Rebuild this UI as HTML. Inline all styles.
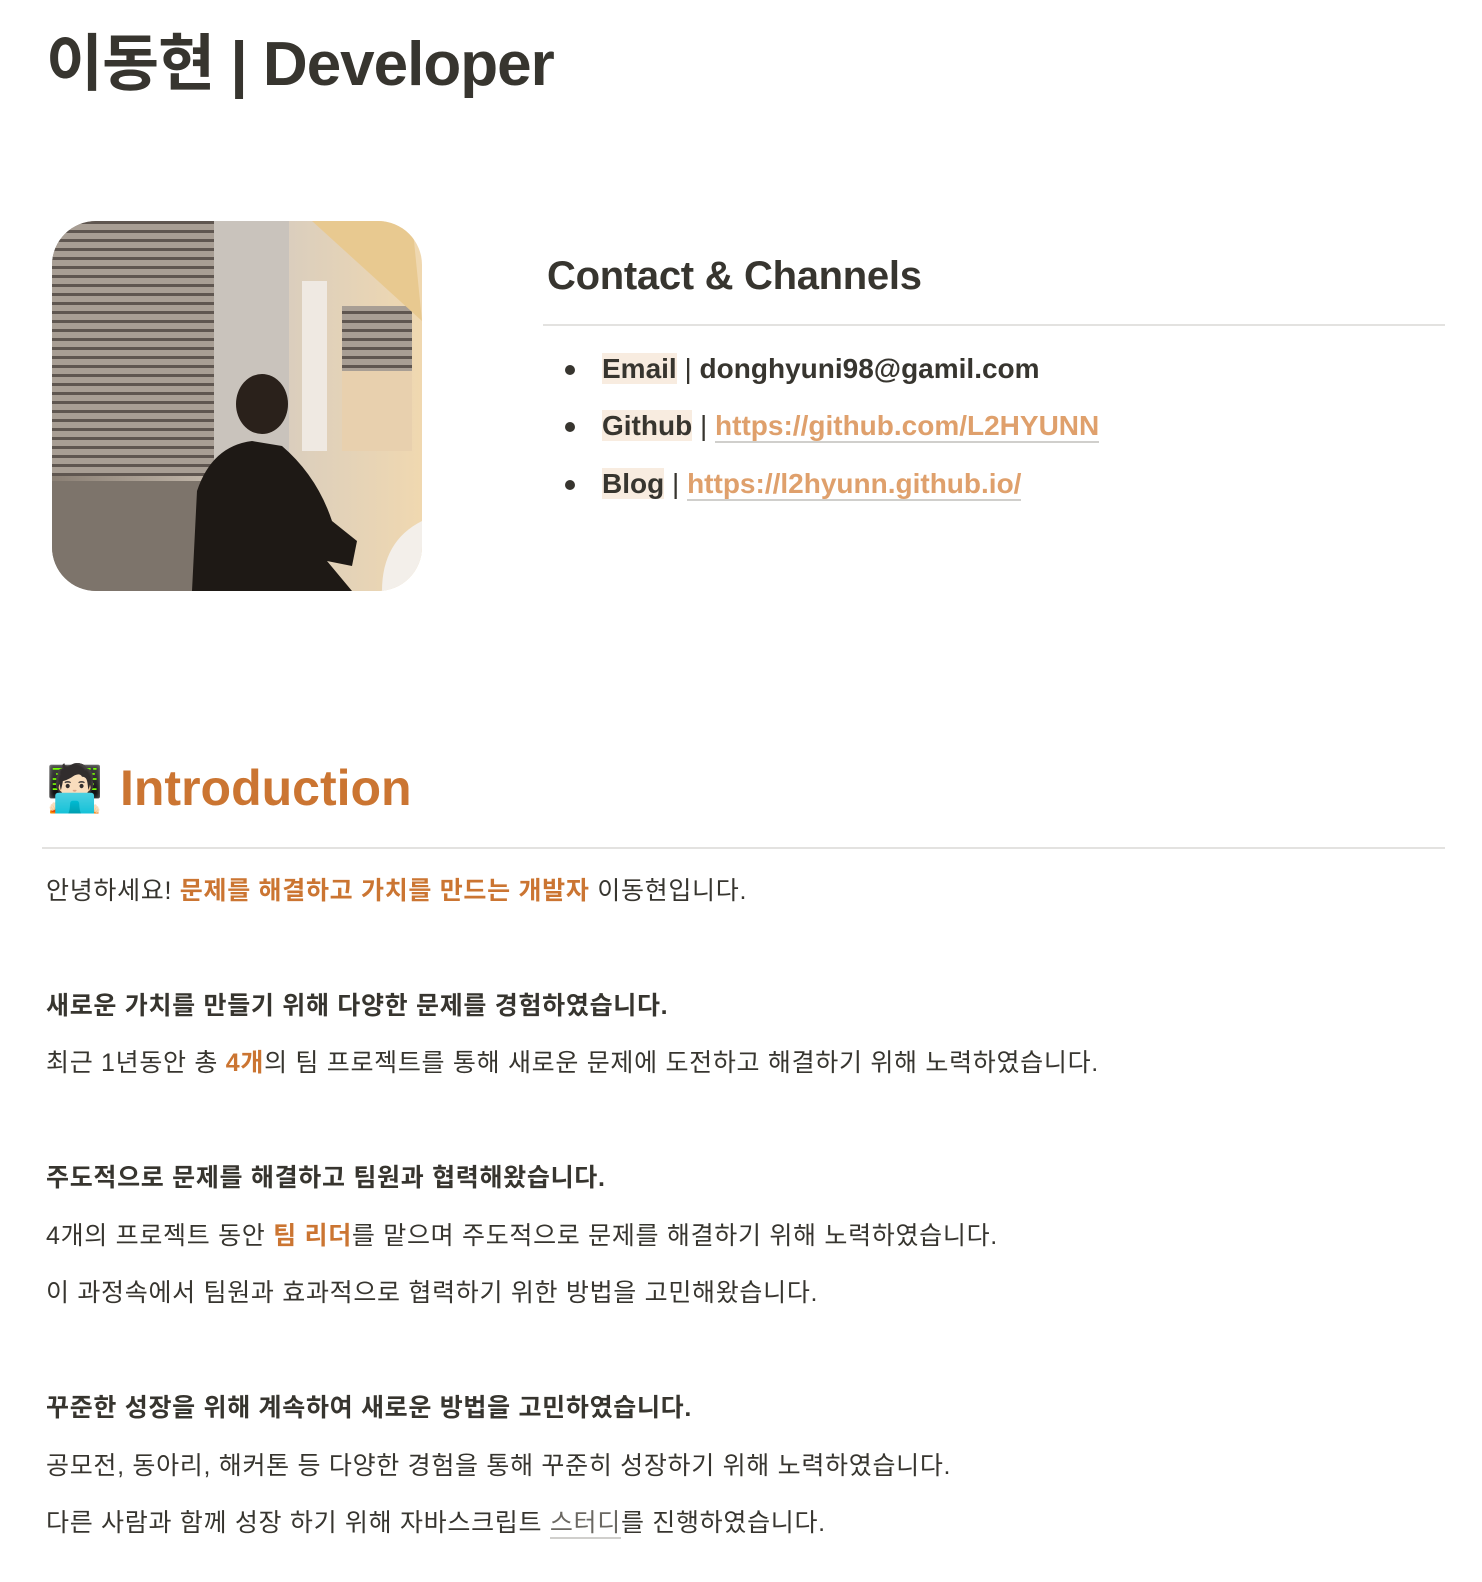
<!DOCTYPE html>
<html><head><meta charset="utf-8"><style>
*{margin:0;padding:0;box-sizing:border-box}
body{width:1482px;height:1582px;background:#fff;color:#37352f;font-family:"Liberation Sans","Noto Sans CJK KR",sans-serif;position:relative;overflow:hidden}
.a{position:absolute;white-space:nowrap}
h1{position:absolute;left:46px;top:26px;font-size:62px;font-weight:700;letter-spacing:-1px;line-height:78px}
.hr{position:absolute;height:2px;background:#e3e2e0}
.li{position:absolute;left:565px;font-size:28px;line-height:36px}
.li .b{position:absolute;left:0;top:14px;width:10px;height:10px;border-radius:50%;background:#37352f}
.li .t{position:absolute;left:37px;top:0;white-space:nowrap}
.hl{background:#f8ece0;font-weight:700}
.lk{color:#dfa06c;font-weight:700;border-bottom:2px solid #d0cfcc}
.p{position:absolute;left:46px;font-size:25px;letter-spacing:0.7px;line-height:32px;white-space:nowrap}
.o{color:#cb7532;font-weight:700}
.bd{font-weight:700}
</style></head><body>
<h1>이동현 | Developer</h1>
<div class="a" style="left:52px;top:221px;width:370px;height:370px;border-radius:44px;overflow:hidden">
<svg width="370" height="370" viewBox="0 0 370 370">
<defs><linearGradient id="g" x1="0" x2="1" y1="0" y2="0"><stop offset="0" stop-color="#8a7f74"/><stop offset="0.6" stop-color="#d8cdbf"/><stop offset="1" stop-color="#f0d8b0"/></linearGradient>
<pattern id="bl" width="10" height="9" patternUnits="userSpaceOnUse"><rect width="10" height="9" fill="#a89e94"/><rect width="10" height="3" fill="#5f5650"/></pattern></defs>
<rect width="370" height="370" fill="url(#g)"/>
<rect x="0" y="0" width="162" height="255" fill="url(#bl)"/>
<rect x="162" y="0" width="75" height="370" fill="#c9c3bc"/>
<rect x="250" y="60" width="25" height="170" fill="#efe9e2"/>
<rect x="290" y="85" width="70" height="65" fill="url(#bl)"/>
<rect x="290" y="150" width="70" height="80" fill="#e8d0ae"/>
<polygon points="260,0 360,0 370,100" fill="#e8c990"/>
<rect x="0" y="260" width="170" height="110" fill="#7d746b"/>
<path d="M140 370 L145 270 Q160 225 200 220 L230 225 Q265 255 280 300 L305 320 L300 345 L275 340 L300 370 Z" fill="#1e1915"/>
<ellipse cx="210" cy="183" rx="26" ry="30" fill="#2a211b"/>
<path d="M330 370 Q330 320 370 300 L370 370 Z" fill="#f3efea"/>
</svg></div>
<div class="a" style="left:547px;top:250px;font-size:40px;font-weight:700;line-height:52px;letter-spacing:-0.3px">Contact &amp; Channels</div>
<div class="hr" style="left:543px;top:324px;width:902px"></div>
<div class="li" style="top:351px"><span class="b"></span><span class="t"><span class="hl">Email</span> | <b>donghyuni98@gamil.com</b></span></div>
<div class="li" style="top:408px"><span class="b"></span><span class="t"><span class="hl">Github</span> | <span class="lk">https://github.com/L2HYUNN</span></span></div>
<div class="li" style="top:466px"><span class="b"></span><span class="t"><span class="hl">Blog</span> | <span class="lk">https://l2hyunn.github.io/</span></span></div>
<div class="a" style="left:46px;top:760px;font-size:46px;line-height:56px">🧑🏻‍💻</div>
<div class="a" style="left:120px;top:756px;font-size:50px;font-weight:700;color:#cb7532;line-height:64px">Introduction</div>
<div class="hr" style="left:42px;top:847px;width:1403px"></div>
<div class="p" style="top:875px">안녕하세요! <span class="o">문제를 해결하고 가치를 만드는 개발자</span> 이동현입니다.</div>
<div class="p bd" style="top:990px">새로운 가치를 만들기 위해 다양한 문제를 경험하였습니다.</div>
<div class="p" style="top:1047px">최근 1년동안 총 <span class="o">4개</span>의 팀 프로젝트를 통해 새로운 문제에 도전하고 해결하기 위해 노력하였습니다.</div>
<div class="p bd" style="top:1162px">주도적으로 문제를 해결하고 팀원과 협력해왔습니다.</div>
<div class="p" style="top:1220px">4개의 프로젝트 동안 <span class="o">팀 리더</span>를 맡으며 주도적으로 문제를 해결하기 위해 노력하였습니다.</div>
<div class="p" style="top:1277px">이 과정속에서 팀원과 효과적으로 협력하기 위한 방법을 고민해왔습니다.</div>
<div class="p bd" style="top:1392px">꾸준한 성장을 위해 계속하여 새로운 방법을 고민하였습니다.</div>
<div class="p" style="top:1450px">공모전, 동아리, 해커톤 등 다양한 경험을 통해 꾸준히 성장하기 위해 노력하였습니다.</div>
<div class="p" style="top:1507px">다른 사람과 함께 성장 하기 위해 자바스크립트 <span style="border-bottom:2px solid #d0cfcc;color:#6b6862">스터디</span>를 진행하였습니다.</div>
</body></html>
